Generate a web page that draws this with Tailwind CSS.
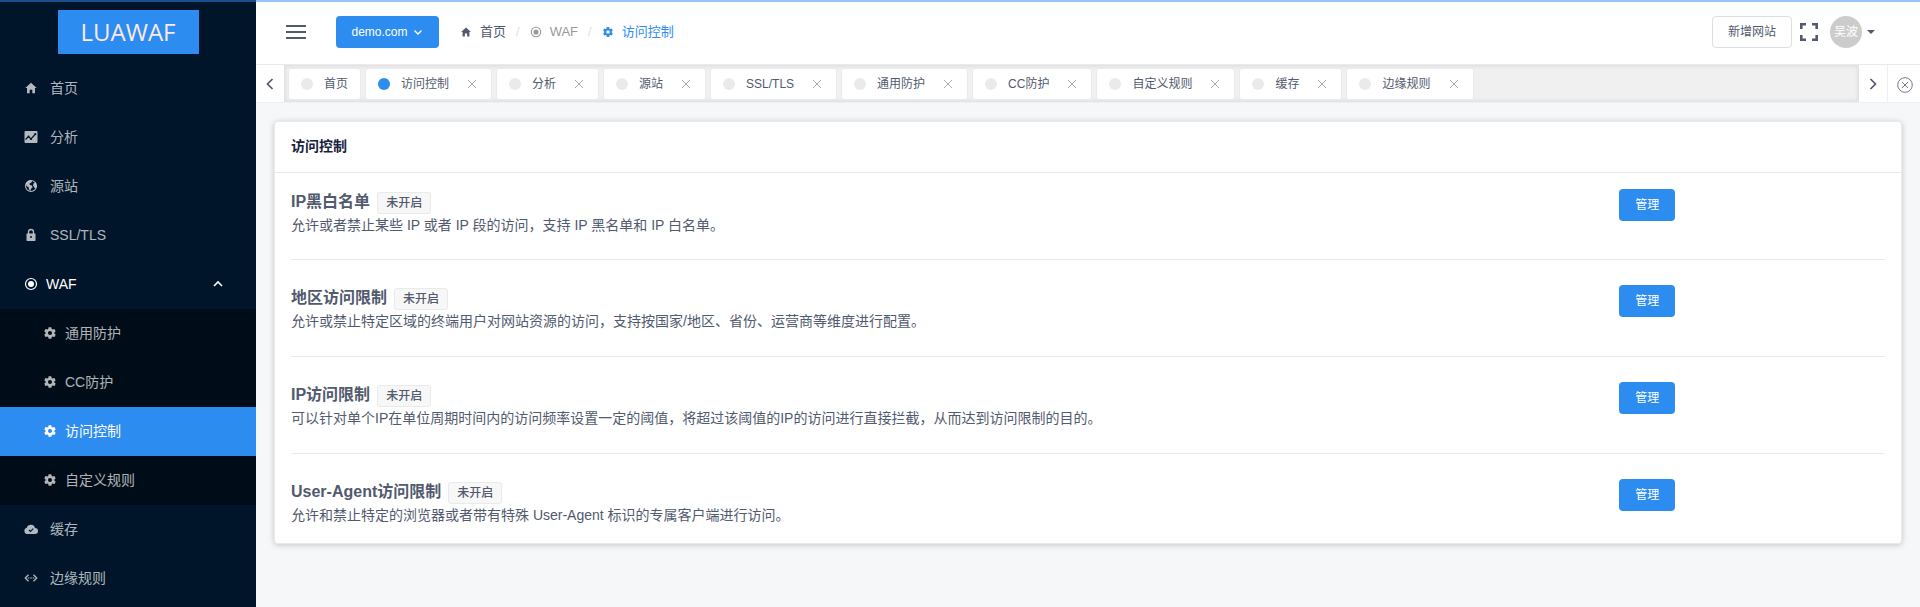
<!DOCTYPE html>
<html lang="zh-CN">
<head>
    <meta charset="UTF-8">
    <meta name="viewport" content="width=device-width, initial-scale=1.0">
    <title>访问控制 - LUAWAF</title>
    <script src="https://cdn.jsdelivr.net/npm/@tailwindcss/browser@4"></script>
</head>
<body class="bg-[#f5f7f9] font-['Liberation_Sans','Noto_Sans_CJK_SC',sans-serif] text-sm text-[#515a6e]">

<!-- Shared icons -->
<svg class="hidden">
    <symbol id="home" viewBox="0 0 512 512"><path fill="currentColor" d="M208 448V320h96v128h97.600V256H464L256 64 48 256h62.400v192z"/></symbol>
    <symbol id="gear" viewBox="0 0 24 24"><path fill="currentColor" d="M19.400 13c.1-.3.1-.6.1-1s0-.7-.1-1l2.100-1.600c.2-.2.2-.4.1-.6l-2-3.500c-.1-.2-.4-.3-.6-.2l-2.500 1c-.5-.4-1.100-.7-1.700-1l-.4-2.600c0-.3-.2-.5-.5-.5h-4c-.3 0-.5.2-.5.400L9.100 5.100c-.6.2-1.200.6-1.700 1l-2.500-1c-.2-.1-.5 0-.6.2l-2 3.500c-.1.2-.1.500.1.600L4.500 11c0 .3-.1.6-.1 1s0 .7.100 1l-2.100 1.600c-.2.2-.2.4-.1.600l2 3.500c.1.2.4.3.6.2l2.500-1c.5.4 1.100.7 1.700 1l.4 2.600c0 .3.200.5.500.5h4c.3 0 .5-.2.5-.5l.4-2.600c.6-.3 1.200-.6 1.700-1l2.500 1c.2.1.5 0 .6-.2l2-3.500c.1-.2.1-.5-.1-.600zM12 15.500a3.500 3.500 0 1 1 0-7 3.500 3.500 0 0 1 0 7z"/></symbol>
    <symbol id="radio" viewBox="0 0 14 14"><circle cx="7" cy="7" r="5.500" fill="none" stroke="currentColor" stroke-width="1.200"/><circle cx="7" cy="7" r="3" fill="currentColor"/></symbol>
    <symbol id="close" viewBox="0 0 14 14"><path fill="none" stroke="currentColor" stroke-width="1" d="M3 3l8 8M11 3l-8 8"/></symbol>
</svg>

<!-- Loading bar -->
<div class="fixed inset-x-0 top-0 z-10 h-0.5 bg-[#2d8cf0]/50"></div>

<div class="flex min-h-screen">
    <aside class="w-64 shrink-0 bg-[#001529]">
        <div class="flex h-16 justify-center pt-2.5">
            <div class="flex h-11 w-[141px] items-center justify-center bg-[#2d8cf0] font-['Open_Sans',sans-serif] text-2xl text-[#fde8e8]">LUAWAF</div>
        </div>
        <nav class="text-white/70">
            <a href="#" class="flex h-[49px] items-center gap-3 pb-0.5 pl-6">
                <svg class="size-3.5"><use href="#home"/></svg>首页
            </a>
            <a href="#" class="flex h-[49px] items-center gap-3 pb-0.5 pl-6">
                <svg class="size-3.5" viewBox="0 0 14 14"><rect x="0.500" y="1" width="13" height="12" rx="1" fill="currentColor"/><path d="M1.500 9.500l3-3 2.500 2.500 4.500-5" fill="none" stroke="#001529" stroke-width="1.200"/><g fill="#001529"><circle cx="4.500" cy="6.500" r="1"/><circle cx="7" cy="9" r="1.100"/><circle cx="11.300" cy="4" r="1.100"/></g></svg>分析
            </a>
            <a href="#" class="flex h-[49px] items-center gap-3 pb-0.5 pl-6">
                <svg class="size-3.5" viewBox="0 0 14 14"><circle cx="7" cy="7" r="5.500" fill="none" stroke="currentColor" stroke-width="1.100"/><path fill="currentColor" d="M2 4.500L5 1.500l3 .3-.5 1.700-2 1 .3 1.500 2.200.6.5 1.800-1.500 1.300L6.500 12 5 10.500 4.600 8.300 2.500 7zM9.500 4.500l2-1 1 3-.8 3-1.700-1.200-1-2z"/></svg>源站
            </a>
            <a href="#" class="flex h-[49px] items-center gap-3 pb-0.5 pl-6">
                <svg class="size-3.5" viewBox="0 0 14 14"><rect x="2.500" y="5.500" width="9" height="7.500" rx="0.800" fill="currentColor"/><path d="M4.500 6V4a2.500 2.500 0 0 1 5 0v2" fill="none" stroke="currentColor" stroke-width="1.300"/><circle cx="7" cy="9" r="1" fill="#001529"/></svg>SSL/TLS
            </a>
            <a href="#" class="flex h-[49px] items-center gap-2 pr-8 pb-0.5 pl-6 text-white">
                <svg class="size-3.5"><use href="#radio"/></svg>WAF
                <svg class="ml-auto size-3" viewBox="0 0 12 12"><path d="M2 8l4-4 4 4" fill="none" stroke="currentColor" stroke-width="1.600"/></svg>
            </a>
            <div class="bg-[#000c17]">
                <a href="#" class="flex h-[49px] items-center gap-2 pb-0.5 pl-[43px]"><svg class="size-3.5"><use href="#gear"/></svg>通用防护</a>
                <a href="#" class="flex h-[49px] items-center gap-2 pb-0.5 pl-[43px]"><svg class="size-3.5"><use href="#gear"/></svg>CC防护</a>
                <a href="#" class="flex h-[49px] items-center gap-2 bg-[#2d8cf0] pb-0.5 pl-[43px] text-white"><svg class="size-3.5"><use href="#gear"/></svg>访问控制</a>
                <a href="#" class="flex h-[49px] items-center gap-2 pb-0.5 pl-[43px]"><svg class="size-3.5"><use href="#gear"/></svg>自定义规则</a>
            </div>
            <a href="#" class="flex h-[49px] items-center gap-3 pb-0.5 pl-6">
                <svg class="size-3.5" viewBox="0 0 14 14"><path fill="currentColor" d="M3.500 12A3.200 3.200 0 0 1 2.800 5.700 4.300 4.300 0 0 1 11 6a3 3 0 0 1 0 6z"/><path d="M5 8l1.500 1.500L9.300 6.700" fill="none" stroke="#001529" stroke-width="1.100"/></svg>缓存
            </a>
            <a href="#" class="flex h-[49px] items-center gap-3 pb-0.5 pl-6">
                <svg class="size-3.5" viewBox="0 0 14 14"><path d="M4.500 3.800L1.300 7l3.200 3.200M9.500 3.800L12.700 7 9.500 10.200" fill="none" stroke="currentColor" stroke-width="1.300"/><path d="M3.800 7h6.400" stroke="currentColor" stroke-width="1.200" stroke-dasharray="1.600 0.800"/></svg>边缘规则
            </a>
        </nav>
    </aside>

    <div class="min-w-0 flex-1">
        <header class="flex h-[65px] items-center border-b border-[#e8eaec] bg-white pr-[45px] pl-[30px]">
            <button type="button" aria-label="折叠菜单" class="mr-[30px]">
                <svg class="block h-3.5 w-5" viewBox="0 0 20 14"><path d="M0 1h20M0 7h20M0 13h20" stroke="currentColor" stroke-width="2"/></svg>
            </button>
            <button type="button" class="flex h-8 w-[103px] items-center justify-center gap-1 rounded bg-[#2d8cf0] text-xs text-white">
                demo.com
                <svg class="size-3" viewBox="0 0 12 12"><path d="M2.500 4.500L6 8l3.500-3.500" fill="none" stroke="currentColor" stroke-width="1.400"/></svg>
            </button>
            <nav class="ml-[21px] flex items-center text-[13px]">
                <a href="#" class="flex items-center gap-2"><svg class="size-3"><use href="#home"/></svg>首页</a>
                <span class="mx-2.5 text-[#dcdee2]">/</span>
                <a href="#" class="flex items-center gap-2 text-[#999]"><svg class="size-3"><use href="#radio"/></svg>WAF</a>
                <span class="mx-2.5 text-[#dcdee2]">/</span>
                <a href="#" class="flex items-center gap-2 text-[#2d8cf0]"><svg class="size-3"><use href="#gear"/></svg>访问控制</a>
            </nav>
            <div class="ml-auto flex items-center">
                <button type="button" class="h-8 w-20 rounded border border-[#dcdee2] text-xs">新增网站</button>
                <button type="button" aria-label="全屏" class="mx-2">
                    <svg class="block size-[18px]" viewBox="0 0 18 18"><path d="M1.300 6V1.300H6M12 1.300h4.700V6M16.700 12v4.700H12M6 16.700H1.300V12" fill="none" stroke="currentColor" stroke-width="2.600"/></svg>
                </button>
                <button type="button" class="ml-1 flex items-center gap-[5px]">
                    <span class="flex size-8 items-center justify-center rounded-full bg-[#ccc] text-xs text-white">吴波</span>
                    <svg class="h-1 w-2" viewBox="0 0 8 4"><path d="M0 0h8L4 4z" fill="currentColor"/></svg>
                </button>
            </div>
        </header>

        <!-- Open tabs -->
        <div class="flex h-[38px] border-b border-[#f0f0f0] bg-white text-xs">
            <button type="button" aria-label="向左" class="flex w-7 items-center justify-center">
                <svg class="size-3.5" viewBox="0 0 14 14"><path d="M9.500 2L4.500 7l5 5" fill="none" stroke="currentColor" stroke-width="1.700"/></svg>
            </button>
            <div class="flex min-w-0 flex-1 items-center gap-1 overflow-hidden bg-[#f0f0f0] px-1 shadow-[inset_0_0_3px_2px_rgba(100,100,100,0.1)]">
                <div class="flex h-8 shrink-0 items-center rounded-[3px] border border-[#e8eaec] bg-white px-3"><i class="mr-[11px] size-3 rounded-full bg-[#e8eaec]"></i>首页</div>
                <div class="flex h-8 shrink-0 items-center rounded-[3px] border border-[#e8eaec] bg-white px-3"><i class="mr-[11px] size-3 rounded-full bg-[#2d8cf0]"></i>访问控制<button type="button" aria-label="关闭" class="ml-4 text-[#aaa]"><svg class="block size-3.5"><use href="#close"/></svg></button></div>
                <div class="flex h-8 shrink-0 items-center rounded-[3px] border border-[#e8eaec] bg-white px-3"><i class="mr-[11px] size-3 rounded-full bg-[#e8eaec]"></i>分析<button type="button" aria-label="关闭" class="ml-4 text-[#aaa]"><svg class="block size-3.5"><use href="#close"/></svg></button></div>
                <div class="flex h-8 shrink-0 items-center rounded-[3px] border border-[#e8eaec] bg-white px-3"><i class="mr-[11px] size-3 rounded-full bg-[#e8eaec]"></i>源站<button type="button" aria-label="关闭" class="ml-4 text-[#aaa]"><svg class="block size-3.5"><use href="#close"/></svg></button></div>
                <div class="flex h-8 shrink-0 items-center rounded-[3px] border border-[#e8eaec] bg-white px-3"><i class="mr-[11px] size-3 rounded-full bg-[#e8eaec]"></i>SSL/TLS<button type="button" aria-label="关闭" class="ml-4 text-[#aaa]"><svg class="block size-3.5"><use href="#close"/></svg></button></div>
                <div class="flex h-8 shrink-0 items-center rounded-[3px] border border-[#e8eaec] bg-white px-3"><i class="mr-[11px] size-3 rounded-full bg-[#e8eaec]"></i>通用防护<button type="button" aria-label="关闭" class="ml-4 text-[#aaa]"><svg class="block size-3.5"><use href="#close"/></svg></button></div>
                <div class="flex h-8 shrink-0 items-center rounded-[3px] border border-[#e8eaec] bg-white px-3"><i class="mr-[11px] size-3 rounded-full bg-[#e8eaec]"></i>CC防护<button type="button" aria-label="关闭" class="ml-4 text-[#aaa]"><svg class="block size-3.5"><use href="#close"/></svg></button></div>
                <div class="flex h-8 shrink-0 items-center rounded-[3px] border border-[#e8eaec] bg-white px-3"><i class="mr-[11px] size-3 rounded-full bg-[#e8eaec]"></i>自定义规则<button type="button" aria-label="关闭" class="ml-4 text-[#aaa]"><svg class="block size-3.5"><use href="#close"/></svg></button></div>
                <div class="flex h-8 shrink-0 items-center rounded-[3px] border border-[#e8eaec] bg-white px-3"><i class="mr-[11px] size-3 rounded-full bg-[#e8eaec]"></i>缓存<button type="button" aria-label="关闭" class="ml-4 text-[#aaa]"><svg class="block size-3.5"><use href="#close"/></svg></button></div>
                <div class="flex h-8 shrink-0 items-center rounded-[3px] border border-[#e8eaec] bg-white px-3"><i class="mr-[11px] size-3 rounded-full bg-[#e8eaec]"></i>边缘规则<button type="button" aria-label="关闭" class="ml-4 text-[#aaa]"><svg class="block size-3.5"><use href="#close"/></svg></button></div>
            </div>
            <button type="button" aria-label="向右" class="flex w-7 items-center justify-center">
                <svg class="size-3.5" viewBox="0 0 14 14"><path d="M4.500 2l5 5-5 5" fill="none" stroke="currentColor" stroke-width="1.700"/></svg>
            </button>
            <button type="button" aria-label="关闭标签" class="flex w-[33px] items-center justify-center border-l border-[#f0f0f0] pt-0.5 pl-0.5">
                <svg class="size-4" viewBox="0 0 16 16"><g fill="none" stroke="currentColor" stroke-width="0.800"><circle cx="8" cy="8" r="7.300"/><path d="M5 5l6 6M11 5l-6 6"/></g></svg>
            </button>
        </div>

        <main class="p-[18px]">
            <section class="rounded border border-[#e8eaec] bg-white shadow-[0_1px_6px_rgba(0,0,0,0.2)]">
                <h1 class="flex h-[51px] items-center border-b border-[#e8eaec] px-4 pb-0.5 font-bold text-[#17233d]">访问控制</h1>
                <div class="px-4 pt-4 pb-[17px]">
                    <div class="flex border-b border-[#e8eaec] pb-[23px]">
                        <div class="w-5/6">
                            <h2 class="flex h-[25px] items-center gap-[7px] text-base font-bold">IP黑白名单<span class="mt-0.5 flex h-[22px] items-center rounded-[3px] border border-[#e8eaec] bg-[#f7f7f7] px-2 text-xs font-medium">未开启</span></h2>
                            <p class="leading-[22px]">允许或者禁止某些 IP 或者 IP 段的访问，支持 IP 黑名单和 IP 白名单。</p>
                        </div>
                        <button type="button" class="h-8 w-14 rounded bg-[#2d8cf0] text-xs text-white">管理</button>
                    </div>
                    <div class="flex border-b border-[#e8eaec] pt-[25px] pb-6">
                        <div class="w-5/6">
                            <h2 class="flex h-[25px] items-center gap-[7px] text-base font-bold">地区访问限制<span class="mt-0.5 flex h-[22px] items-center rounded-[3px] border border-[#e8eaec] bg-[#f7f7f7] px-2 text-xs font-medium">未开启</span></h2>
                            <p class="leading-[22px]">允许或禁止特定区域的终端用户对网站资源的访问，支持按国家/地区、省份、运营商等维度进行配置。</p>
                        </div>
                        <button type="button" class="h-8 w-14 rounded bg-[#2d8cf0] text-xs text-white">管理</button>
                    </div>
                    <div class="flex border-b border-[#e8eaec] pt-[25px] pb-6">
                        <div class="w-5/6">
                            <h2 class="flex h-[25px] items-center gap-[7px] text-base font-bold">IP访问限制<span class="mt-0.5 flex h-[22px] items-center rounded-[3px] border border-[#e8eaec] bg-[#f7f7f7] px-2 text-xs font-medium">未开启</span></h2>
                            <p class="leading-[22px]">可以针对单个IP在单位周期时间内的访问频率设置一定的阈值，将超过该阈值的IP的访问进行直接拦截，从而达到访问限制的目的。</p>
                        </div>
                        <button type="button" class="h-8 w-14 rounded bg-[#2d8cf0] text-xs text-white">管理</button>
                    </div>
                    <div class="flex pt-[25px]">
                        <div class="w-5/6">
                            <h2 class="flex h-[25px] items-center gap-[7px] text-base font-bold">User-Agent访问限制<span class="mt-0.5 flex h-[22px] items-center rounded-[3px] border border-[#e8eaec] bg-[#f7f7f7] px-2 text-xs font-medium">未开启</span></h2>
                            <p class="leading-[22px]">允许和禁止特定的浏览器或者带有特殊 User-Agent 标识的专属客户端进行访问。</p>
                        </div>
                        <button type="button" class="h-8 w-14 rounded bg-[#2d8cf0] text-xs text-white">管理</button>
                    </div>
                </div>
            </section>
        </main>
    </div>
</div>

</body>
</html>
